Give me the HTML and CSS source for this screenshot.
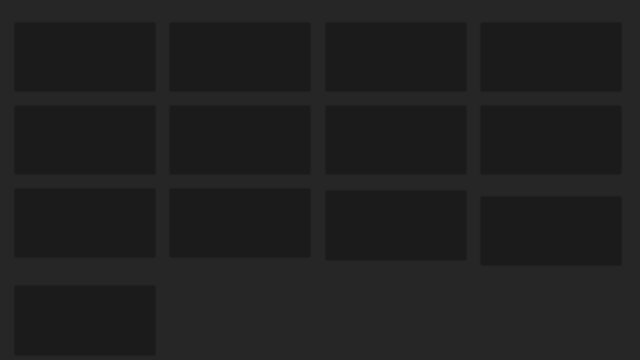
FILE: index.html
```html
<!DOCTYPE html>
<html lang="en">
<head>
<meta charset="utf-8">
<title>Grid</title>
<link rel="stylesheet" href="styles.css">
</head>
<body>
<main class="page">
  <div class="grid">
    <div class="tile"></div>
    <div class="tile"></div>
    <div class="tile"></div>
    <div class="tile"></div>
    <div class="tile"></div>
    <div class="tile"></div>
    <div class="tile"></div>
    <div class="tile"></div>
    <div class="tile"></div>
    <div class="tile"></div>
    <div class="tile tile-drop2"></div>
    <div class="tile tile-drop8"></div>
    <div class="tile tile-last"></div>
  </div>
</main>
</body>
</html>
```

FILE: styles.css
```css
html, body {
  margin: 0;
  padding: 0;
  background: #262626;
  font-family: "Liberation Sans", Arial, sans-serif;
}
.page {
  width: 640px;
  height: 360px;
  box-sizing: border-box;
  padding: 23px 0 0 15px;
  overflow: hidden;
  border-top: 1px solid #2a2a2a;
  margin-top: -1px;
}
.grid {
  display: grid;
  grid-template-columns: repeat(4, 140px);
  grid-auto-rows: 68px;
  column-gap: 15.4px;
  row-gap: 15px;
  align-items: start;
}
.tile {
  height: 68px;
  background: #1b1b1b;
  box-shadow: 0 0 2px 0 rgba(0, 0, 0, 0.45);
}
.tile-drop2 {
  margin-top: 2px;
  height: 69px;
}
.tile-drop8 {
  margin-top: 8px;
}
.tile-last {
  margin-top: 14px;
  height: 69px;
}
```
